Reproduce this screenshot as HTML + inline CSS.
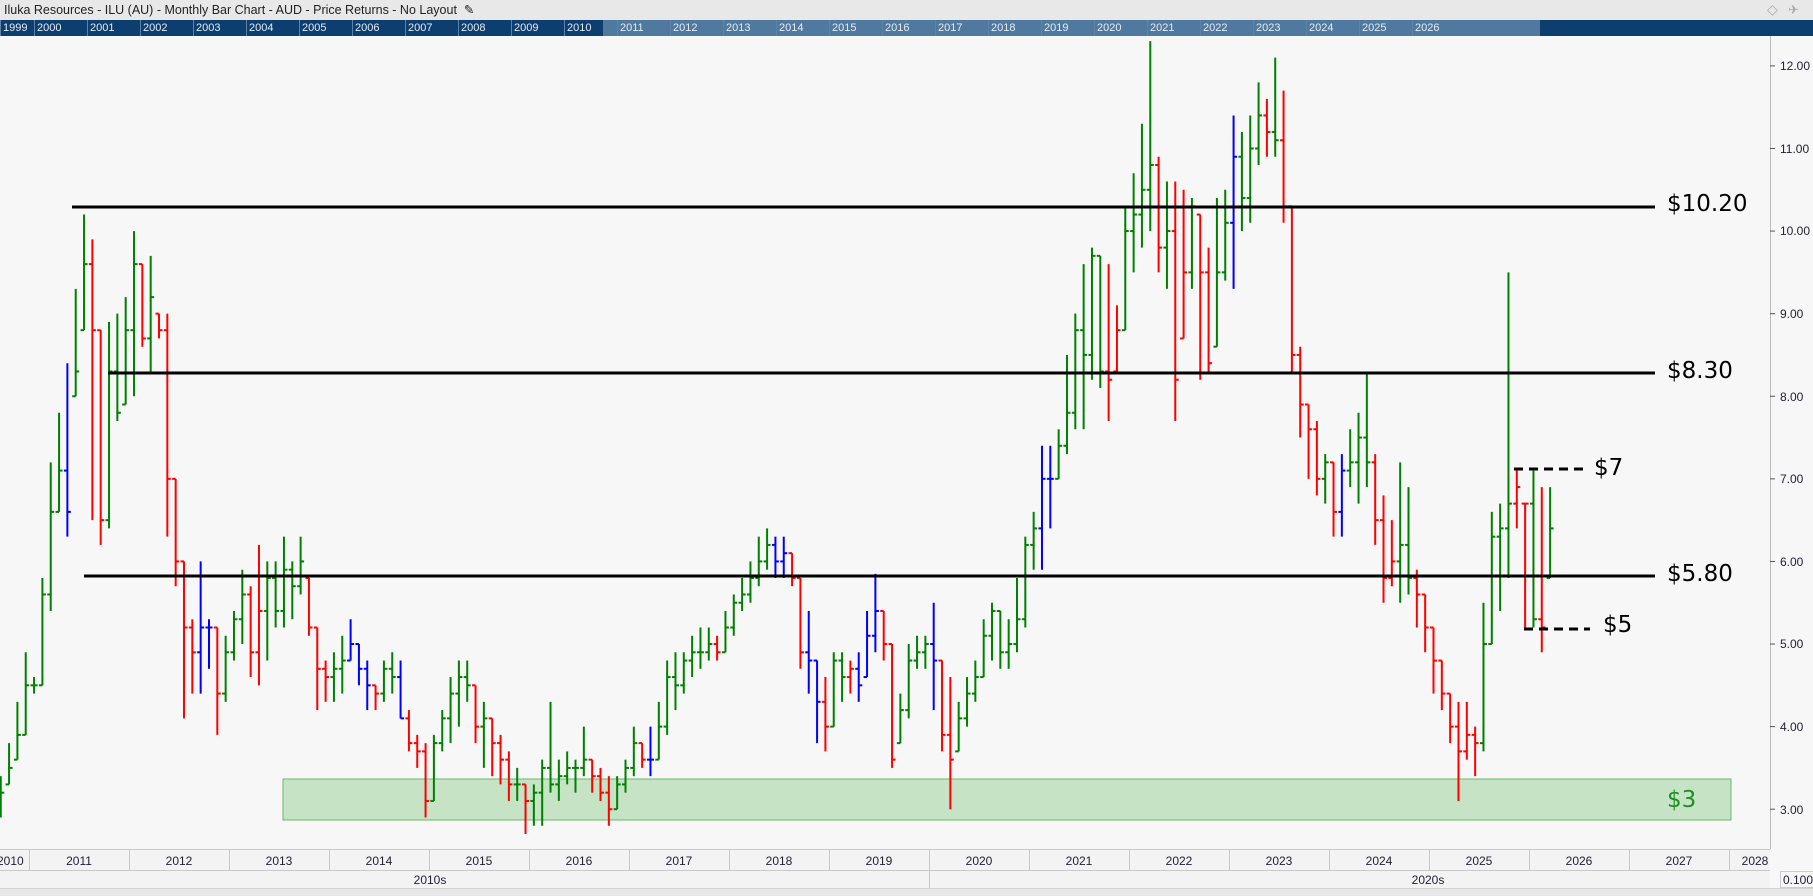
<!DOCTYPE html>
<html><head><meta charset="utf-8">
<style>
*{margin:0;padding:0;box-sizing:border-box}
body{width:1813px;height:896px;overflow:hidden;background:#f7f7f7;font-family:"Liberation Sans","DejaVu Sans",sans-serif;position:relative}
#title{position:absolute;left:0;top:0;width:1813px;height:20px;background:#e8e8e8;font-size:12.5px;color:#222;line-height:20px;padding-left:4px}
#nav{position:absolute;left:0;top:20px;width:1813px;height:16px;background:#0c3e70}
#sel{position:absolute;left:603px;top:0;width:937px;height:16px;background:#4f799f}
.ny{position:absolute;top:0;height:16px;font-size:11px;line-height:16px;color:#e4ecf4;border-left:1px solid #5f82a8;padding-left:2px}
svg{position:absolute;left:0;top:0}
.ax{font-size:12px;fill:#223;font-family:"Liberation Sans",sans-serif}
.big{font-size:23px;font-family:"DejaVu Sans","Liberation Sans",sans-serif}
</style></head><body>
<div id="title">Iluka Resources - ILU (AU) - Monthly Bar Chart - AUD - Price Returns - No Layout &nbsp;✎</div>
<div id="nav"><div id="sel"></div>
<div class="ny" style="left:0">1999</div><div class="ny" style="left:34px">2000</div><div class="ny" style="left:87px">2001</div><div class="ny" style="left:140px">2002</div><div class="ny" style="left:193px">2003</div><div class="ny" style="left:246px">2004</div><div class="ny" style="left:299px">2005</div><div class="ny" style="left:352px">2006</div><div class="ny" style="left:405px">2007</div><div class="ny" style="left:458px">2008</div><div class="ny" style="left:511px">2009</div><div class="ny" style="left:564px">2010</div><div class="ny" style="left:617px">2011</div><div class="ny" style="left:670px">2012</div><div class="ny" style="left:723px">2013</div><div class="ny" style="left:776px">2014</div><div class="ny" style="left:829px">2015</div><div class="ny" style="left:882px">2016</div><div class="ny" style="left:935px">2017</div><div class="ny" style="left:988px">2018</div><div class="ny" style="left:1041px">2019</div><div class="ny" style="left:1094px">2020</div><div class="ny" style="left:1147px">2021</div><div class="ny" style="left:1200px">2022</div><div class="ny" style="left:1253px">2023</div><div class="ny" style="left:1306px">2024</div><div class="ny" style="left:1359px">2025</div><div class="ny" style="left:1412px">2026</div>
</div>
<svg width="1813" height="896" id="s" xmlns="http://www.w3.org/2000/svg">
<text x="1767" y="14" font-size="14" fill="#aaa">◇</text><text x="1788" y="14" font-size="13" fill="#aaa">✈</text>
<rect x="283" y="779" width="1448" height="41" fill="#c6e3c6" stroke="#6ab86a" stroke-width="1"/>
<g id="bars"></g>
<line x1="72" y1="207" x2="1655" y2="207" stroke="#000" stroke-width="3"/>
<line x1="108" y1="373" x2="1655" y2="373" stroke="#000" stroke-width="3"/>
<line x1="84" y1="576" x2="1655" y2="576" stroke="#000" stroke-width="3"/>
<line x1="1514" y1="469" x2="1584" y2="469" stroke="#000" stroke-width="3" stroke-dasharray="9,6"/>
<line x1="1524" y1="629" x2="1590" y2="629" stroke="#000" stroke-width="3" stroke-dasharray="9,6"/>
<text class="big" x="1667" y="211">$10.20</text>
<text class="big" x="1667" y="378">$8.30</text>
<text class="big" x="1667" y="581">$5.80</text>
<text class="big" x="1594" y="475">$7</text>
<text class="big" x="1603" y="632">$5</text>
<text class="big" x="1667" y="807" fill="#1f8f1f">$3</text>
<line x1="1770.5" y1="36" x2="1770.5" y2="849" stroke="#bbb"/>
<g id="yax"></g>
<rect x="0" y="849" width="1770" height="39" fill="#f3f3f3"/>
<line x1="0" y1="849.5" x2="1770" y2="849.5" stroke="#c8c8c8"/>
<line x1="0" y1="870.5" x2="1770" y2="870.5" stroke="#c8c8c8"/>
<rect x="0" y="888" width="1813" height="8" fill="#e8e8e8"/>
<line x1="0" y1="888.5" x2="1813" y2="888.5" stroke="#d0d0d0"/>
<g id="xax"></g>
<text class="ax" x="430" y="884" text-anchor="middle">2010s</text>
<text class="ax" x="1428" y="884" text-anchor="middle">2020s</text>
<line x1="929.5" y1="870" x2="929.5" y2="888" stroke="#c8c8c8"/>
<rect x="1780.5" y="871.5" width="40" height="16" fill="#f7f7f7" stroke="#ccc"/>
<text class="ax" x="1783" y="884" font-size="11">0.1006</text>
<text class="ax" x="1780" y="70">12.00</text><text class="ax" x="1780" y="153">11.00</text><text class="ax" x="1780" y="235">10.00</text><text class="ax" x="1780" y="318">9.00</text><text class="ax" x="1780" y="401">8.00</text><text class="ax" x="1780" y="483">7.00</text><text class="ax" x="1780" y="566">6.00</text><text class="ax" x="1780" y="648">5.00</text><text class="ax" x="1780" y="731">4.00</text><text class="ax" x="1780" y="814">3.00</text>
<text class="ax" x="-3" y="865">2010</text><text class="ax" x="79" y="865" text-anchor="middle">2011</text><text class="ax" x="179" y="865" text-anchor="middle">2012</text><text class="ax" x="279" y="865" text-anchor="middle">2013</text><text class="ax" x="379" y="865" text-anchor="middle">2014</text><text class="ax" x="479" y="865" text-anchor="middle">2015</text><text class="ax" x="579" y="865" text-anchor="middle">2016</text><text class="ax" x="679" y="865" text-anchor="middle">2017</text><text class="ax" x="779" y="865" text-anchor="middle">2018</text><text class="ax" x="879" y="865" text-anchor="middle">2019</text><text class="ax" x="979" y="865" text-anchor="middle">2020</text><text class="ax" x="1079" y="865" text-anchor="middle">2021</text><text class="ax" x="1179" y="865" text-anchor="middle">2022</text><text class="ax" x="1279" y="865" text-anchor="middle">2023</text><text class="ax" x="1379" y="865" text-anchor="middle">2024</text><text class="ax" x="1479" y="865" text-anchor="middle">2025</text><text class="ax" x="1579" y="865" text-anchor="middle">2026</text><text class="ax" x="1679" y="865" text-anchor="middle">2027</text><text class="ax" x="1755" y="865" text-anchor="middle">2028</text>
</svg>
<script>
var NS="http://www.w3.org/2000/svg";
function el(p,t,a){var e=document.createElementNS(NS,t);for(var k in a)e.setAttribute(k,a[k]);p.appendChild(e);return e;}
var yax=document.getElementById('yax'),xax=document.getElementById('xax'),bars=document.getElementById('bars');
function Y(p){return 809.2-(p-3)*82.59;}
for(var p=3;p<=12;p++){el(yax,'line',{x1:1770,x2:1775,y1:Y(p),y2:Y(p),stroke:'#555'});}
for(var i=0;i<18;i++){var x=29.5+i*100;el(xax,'line',{x1:x,x2:x,y1:849,y2:870,stroke:'#c8c8c8'});}
var D=[[3.2,3.4,2.9],[3.5,3.8,3.3],[3.9,4.3,3.6],[4.5,4.9,3.9],[4.5,4.6,4.4],[5.6,5.8,4.5],[6.6,7.2,5.4],[7.1,7.8,6.6],[6.6,8.4,6.3,'b'],[8.3,9.3,8.0],[9.6,10.2,8.8],[8.8,9.9,6.5,'r'],[6.5,8.8,6.2,'r'],[8.3,8.9,6.4],[7.8,9.0,7.7],[8.8,9.2,7.9],[9.6,10.0,8.0],[8.7,9.6,8.6,'r'],[9.2,9.7,8.3],[8.8,9.0,8.7,'r'],[7.0,9.0,6.3,'r'],[6.0,7.0,5.7,'r'],[5.2,6.0,4.1,'r'],[4.9,5.3,4.4,'r'],[5.2,6.0,4.4,'b'],[5.2,5.3,4.7,'b'],[4.4,5.2,3.9,'r'],[4.9,5.1,4.3],[5.3,5.4,4.8],[5.6,5.9,5.0],[4.9,5.7,4.6,'r'],[5.4,6.2,4.5,'r'],[5.8,6.0,4.8],[5.4,6.0,5.2],[5.9,6.3,5.2],[5.7,6.0,5.3],[6.0,6.3,5.6],[5.2,5.8,5.1,'r'],[4.7,5.2,4.2,'r'],[4.6,4.8,4.3,'r'],[4.7,4.9,4.3],[4.8,5.1,4.4],[5.0,5.3,4.8,'b'],[4.7,5.0,4.5,'b'],[4.5,4.8,4.2,'b'],[4.4,4.5,4.2,'r'],[4.7,4.8,4.3],[4.6,4.9,4.4],[4.1,4.8,4.1,'b'],[3.8,4.2,3.7,'r'],[3.7,3.9,3.5,'r'],[3.1,3.8,2.9,'r'],[3.8,3.9,3.1],[4.1,4.2,3.7],[4.4,4.6,3.8],[4.6,4.8,4.0],[4.5,4.8,4.3],[4.0,4.5,3.8,'r'],[4.1,4.3,3.5],[3.8,4.1,3.4,'r'],[3.6,3.9,3.3,'r'],[3.3,3.7,3.1,'r'],[3.3,3.5,3.1],[3.1,3.3,2.7,'r'],[3.2,3.3,2.8],[3.5,3.6,2.8],[3.3,4.3,3.2],[3.4,3.6,3.1],[3.5,3.7,3.3],[3.5,3.6,3.2],[3.6,4.0,3.4],[3.4,3.6,3.2,'r'],[3.2,3.5,3.1,'r'],[3.0,3.4,2.8,'r'],[3.3,3.4,3.0],[3.5,3.6,3.2],[3.8,4.0,3.4],[3.6,3.8,3.5,'r'],[3.6,4.0,3.4,'b'],[4.0,4.3,3.6],[4.6,4.8,3.9],[4.5,4.9,4.2],[4.8,4.9,4.4],[4.9,5.1,4.6],[4.9,5.2,4.7],[5.0,5.2,4.8],[4.9,5.1,4.8,'r'],[5.2,5.4,4.9],[5.5,5.6,5.1],[5.6,5.8,5.4],[5.8,6.0,5.5],[6.0,6.3,5.7],[6.2,6.4,5.9],[6.0,6.3,5.8,'b'],[6.1,6.3,5.8,'b'],[5.8,6.1,5.7,'r'],[4.9,5.8,4.7,'r'],[4.8,5.4,4.4,'b'],[4.3,4.8,3.8,'b'],[4.0,4.6,3.7,'r'],[4.8,4.9,4.0],[4.6,4.9,4.3],[4.7,4.8,4.4,'r'],[4.5,4.9,4.3,'b'],[5.1,5.4,4.6,'b'],[5.4,5.85,4.9,'b'],[5.0,5.4,4.8,'r'],[3.6,5.0,3.5,'r'],[4.2,4.4,3.8],[4.8,5.0,4.1],[4.9,5.1,4.7],[5.0,5.1,4.7],[4.8,5.5,4.2,'b'],[3.9,4.8,3.7,'r'],[3.6,4.6,3.0,'r'],[4.1,4.3,3.7],[4.4,4.6,4.0],[4.6,4.8,4.3],[5.1,5.3,4.6],[5.4,5.5,4.8],[4.9,5.4,4.7],[5.0,5.3,4.7],[5.3,5.8,4.9],[6.2,6.3,5.2],[6.4,6.6,5.9],[7.0,7.4,5.9,'b'],[7.0,7.4,6.4,'b'],[7.4,7.6,7.0],[7.8,8.5,7.3],[8.8,9.0,7.6],[8.5,9.6,7.6],[9.7,9.8,8.2],[8.3,9.7,8.1],[8.2,9.6,7.7,'r'],[8.8,9.1,8.3,'r'],[10.0,10.3,8.8],[10.2,10.7,9.5],[10.5,11.3,9.8],[10.8,12.3,10.0],[9.8,10.9,9.5,'r'],[10.0,10.6,9.3],[8.2,10.6,7.7,'r'],[9.5,10.5,8.7,'r'],[10.3,10.4,9.3],[9.5,10.2,8.2,'r'],[8.4,9.8,8.3,'r'],[9.5,10.4,8.6],[10.1,10.5,9.4],[10.9,11.4,9.3,'b'],[10.4,11.2,10.0],[11.0,11.4,10.1],[11.4,11.8,10.8],[11.2,11.6,10.9,'r'],[11.1,12.1,10.9],[10.3,11.7,10.1,'r'],[8.5,10.3,8.3,'r'],[7.9,8.6,7.5,'r'],[7.6,7.9,7.0,'r'],[7.0,7.7,6.8,'r'],[7.2,7.3,6.7],[6.6,7.2,6.3,'r'],[7.1,7.3,6.3,'b'],[7.2,7.6,6.9],[7.5,7.8,6.7],[7.2,8.3,6.9],[6.5,7.3,6.2,'r'],[5.8,6.8,5.5,'r'],[6.0,6.5,5.7,'r'],[6.2,7.2,5.5],[5.8,6.9,5.6],[5.6,5.9,5.2,'r'],[5.2,5.6,4.9,'r'],[4.8,5.2,4.4,'r'],[4.4,4.8,4.2,'r'],[4.0,4.4,3.8,'r'],[3.7,4.3,3.1,'r'],[3.9,4.3,3.6,'r'],[3.8,4.0,3.4,'r'],[5.0,5.5,3.7],[6.3,6.6,5.0],[6.4,6.7,5.4],[6.7,9.5,5.8],[6.9,7.1,6.4,'r'],[6.7,6.6,5.2,'r'],[5.3,7.1,5.2],[5.2,6.9,4.9,'r'],[6.4,6.9,5.8]];
var prev=3.1;
for(var i=0;i<D.length;i++){var d=D[i],m=i+8,x=-65.9+8.33*m;
var c=d[0],h=Math.max(d[1],c),l=Math.min(d[2],c),o=Math.min(h,Math.max(l,prev));
var col=d[3]=='r'?'#ff0000':d[3]=='b'?'#0000ff':'#008000';
el(bars,'line',{x1:x,x2:x,y1:Y(h),y2:Y(l),stroke:col,'stroke-width':2});
el(bars,'line',{x1:x-3.5,x2:x,y1:Y(o),y2:Y(o),stroke:col,'stroke-width':2});
el(bars,'line',{x1:x,x2:x+3.5,y1:Y(c),y2:Y(c),stroke:col,'stroke-width':2});
prev=c;}
</script>
</body></html>
